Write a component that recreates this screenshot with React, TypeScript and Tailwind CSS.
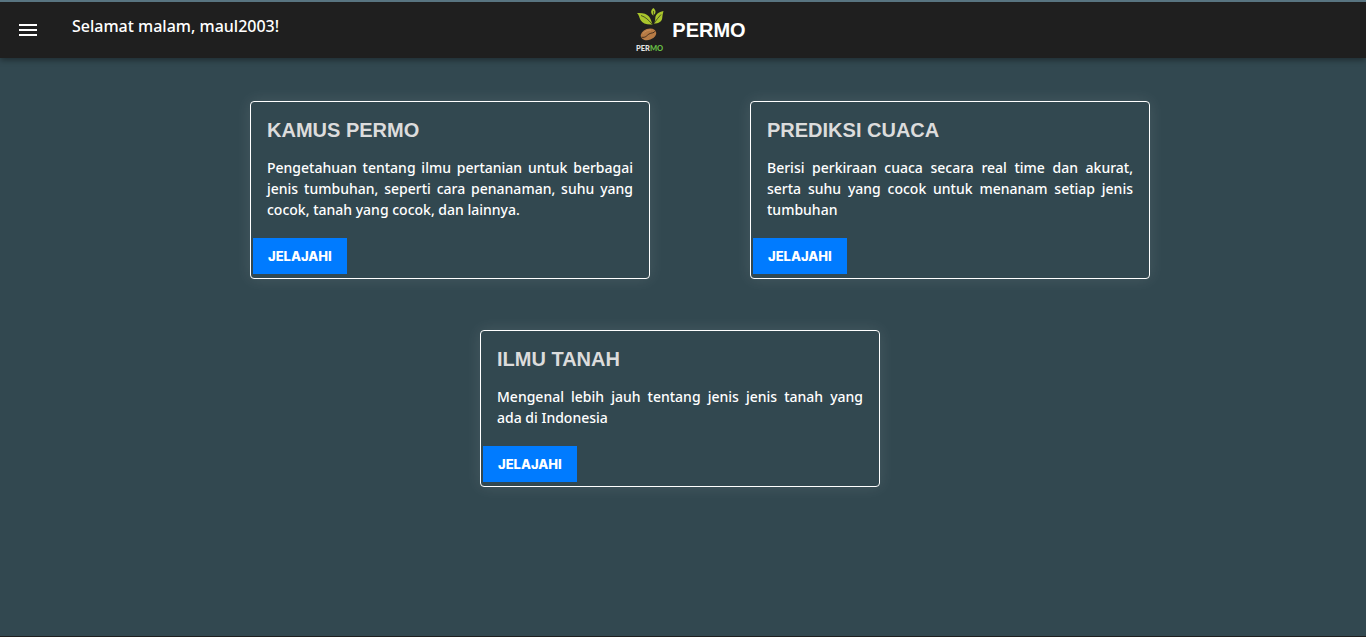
type Topic = { title: string; text: string; href: string };

const topics: Topic[] = [
  {
    title: "KAMUS PERMO",
    text: "Pengetahuan tentang ilmu pertanian untuk berbagai jenis tumbuhan, seperti cara penanaman, suhu yang cocok, tanah yang cocok, dan lainnya.",
    href: "#kamus",
  },
  {
    title: "PREDIKSI CUACA",
    text: "Berisi perkiraan cuaca secara real time dan akurat, serta suhu yang cocok untuk menanam setiap jenis tumbuhan",
    href: "#cuaca",
  },
  {
    title: "ILMU TANAH",
    text: "Mengenal lebih jauh tentang jenis jenis tanah yang ada\u00a0di Indonesia",
    href: "#tanah",
  },
];

function Logo() {
  return (
    <svg viewBox="0 0 36 52" className="h-[52px] w-9" aria-hidden="true">
      <path d="M5 9C10 8.500 14.500 9.500 17 12.500C19 15 19.500 18 20.500 20.500C15 21 10.500 19.500 8.500 16C7.300 13.500 7 11 5 9Z" fill="#a9c52c" />
      <path d="M9 11.500C13.500 13 16.500 16 20 20" fill="none" stroke="#1f1f1f" strokeWidth="0.700" />
      <path d="M21.500 4C18.500 6 18.300 9.500 21.300 11.500C24.300 9 24.200 6.500 21.500 4Z" fill="#a9c52c" />
      <path d="M21.500 7V11" fill="none" stroke="#1f1f1f" strokeWidth="0.600" />
      <path d="M31.500 7C26.500 8 23.500 10.500 23.300 14C23.200 16 23 18 21.700 19.500C27 19.500 30 17.500 30.300 13.500C30.500 11 31 9 31.500 7Z" fill="#a9c52c" />
      <path d="M29 10.500C26.500 13 24.500 16 22 19.300" fill="none" stroke="#1f1f1f" strokeWidth="0.700" />
      <ellipse cx="16.500" cy="30.300" rx="8" ry="5.600" transform="rotate(-19 16.500 30.300)" fill="#b77b45" />
      <path d="M9.500 33.200C14 34 14.500 31.500 17 30C19.500 28.500 22 29.500 23.500 26.800" fill="none" stroke="#3b281a" strokeWidth="0.900" />
      <path d="M11 29.500C13 27.200 16 26 19 26" fill="none" stroke="#cc9662" strokeWidth="0.800" />
      <text x="4" y="47" fontSize="7.500" fontWeight="900" fontFamily="Lato, sans-serif" fill="#e2e2e2">
        PER<tspan fill="#67bd45">MO</tspan>
      </text>
    </svg>
  );
}

function Card({ topic }: { topic: Topic }) {
  return (
    <article className="w-full max-w-[400px] rounded border border-white pb-1 shadow-[0_0_16px_rgba(255,255,255,0.1)]">
      <div className="px-4 pt-4">
        <h2 className="font-['Liberation_Sans',sans-serif] text-xl leading-6 font-bold text-[#dcdcdc]">{topic.title}</h2>
        <p className="mt-[15px] text-justify text-sm leading-[21px] font-medium text-white">{topic.text}</p>
      </div>
      <a
        href={topic.href}
        className="mt-[18px] ml-0.5 inline-flex h-9 items-center bg-[#007bff] px-[15px] pt-0.5 align-top font-['Inter','Liberation_Sans',sans-serif] text-[13px] font-extrabold text-white"
      >
        JELAJAHI
      </a>
    </article>
  );
}

export default function App() {
  return (
    <div className="flex min-h-screen flex-col border-b border-[#202020] bg-[#324850] font-['Noto_Sans',sans-serif]">
      <header className="grid h-[58px] grid-cols-[1fr_auto_1fr] border-t-2 border-[#587480] bg-[#1f1f1f] shadow-[0_2px_6px_rgba(0,0,0,0.4)]">
        <div className="flex items-start pl-4">
          <button type="button" aria-label="Menu" className="mt-4 text-white">
            <svg viewBox="0 0 24 24" className="size-6" fill="currentColor" aria-hidden="true">
              <path d="M3 18h18v-2H3v2zm0-5h18v-2H3v2zm0-7v2h18V6H3z" />
            </svg>
          </button>
          <p className="mt-3 ml-8 text-base leading-6 font-medium text-white">Selamat malam, maul2003!</p>
        </div>
        <a href="#beranda" className="ml-3 flex items-center gap-1 text-white">
          <Logo />
          <span className="font-['Liberation_Sans',sans-serif] text-xl font-bold">PERMO</span>
        </a>
      </header>
      <main className="flex flex-col gap-[51px] px-4 pt-[43px] pb-10">
        <div className="flex flex-wrap items-end justify-center gap-x-[100px] gap-y-12 lg:pl-[34px]">
          <Card topic={topics[0]} />
          <Card topic={topics[1]} />
        </div>
        <div className="flex justify-center lg:pr-1.5">
          <Card topic={topics[2]} />
        </div>
      </main>
    </div>
  );
}
